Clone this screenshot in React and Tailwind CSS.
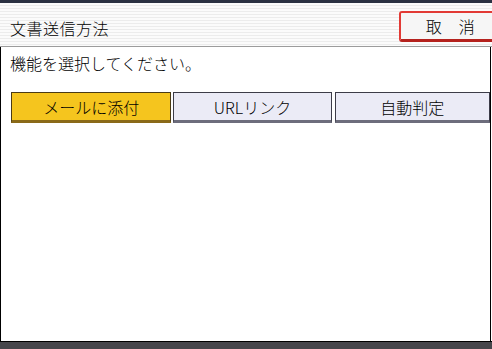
const font = { fontFamily: '"Noto Sans CJK JP", "Noto Sans", sans-serif' };

const choices = [
  { label: "メールに添付", selected: true },
  { label: "URLリンク", selected: false },
  { label: "自動判定", selected: false },
];

export default function App() {
  return (
    <div
      className="w-[492px] h-[349px] flex flex-col overflow-hidden bg-white text-black font-light"
      style={font}
    >
      {/* top rim */}
      <div className="h-[3px] bg-[#2b3142]" />

      {/* title bar */}
      <div className="h-[43px] flex items-start justify-between bg-[repeating-linear-gradient(to_bottom,#fbfbfb_0px,#fbfbfb_2px,#ececec_2px,#ececec_3px)]">
        <div className="pl-[10px] pt-[15px] text-[16px] leading-[20px] tracking-[0.5px]">
          文書送信方法
        </div>
        <button className="mt-[8px] -mr-[10px] w-[103px] h-[31px] rounded-[3px] border-2 border-[#e23a35] border-b-[3px] border-b-[#b5221e] bg-[#f6f6f6] text-[16px] leading-none tracking-[0.5px]">
          取　消
        </button>
      </div>
      <div className="h-px bg-[#9c9c9c]" />

      {/* body */}
      <div className="flex-1 border-l border-r border-black mr-[1px] flex flex-col">
        <div className="pl-[9px] pt-[7px] text-[16px] leading-[18px]">
          機能を選択してください。
        </div>
        <div className="mt-[20px] pl-[10px] flex gap-[2px]">
          {choices.map((c) => (
            <button
              key={c.label}
              className={
                c.selected
                  ? "w-[161px] h-[31px] border border-[#4a3a14] border-b-[3px] border-b-[#8a6a18] bg-[#f5c51e] text-[16px] leading-none"
                  : "w-[159px] h-[31px] border border-[#3c3c48] border-b-[3px] border-b-[#6d6d7c] bg-[#ebebf6] text-[16px] leading-none last:w-[156px] last:ml-[1px]"
              }
            >
              {c.label}
            </button>
          ))}
        </div>
      </div>

      {/* bottom rim */}
      <div className="h-[8px] border-t border-black bg-[#46464b]" />
    </div>
  );
}
